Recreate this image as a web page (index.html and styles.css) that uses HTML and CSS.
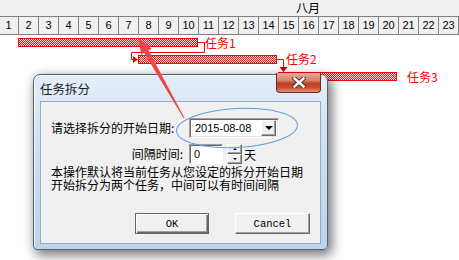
FILE: index.html
```html
<!DOCTYPE html>
<html lang="zh-CN">
<head>
    <meta charset="UTF-8">
    <title>任务拆分</title>
    <link rel="stylesheet" href="styles.css">
</head>
<body>
    <div class="page">
        <div class="gantt">
            <div class="months"><span class="month">八月</span></div>
            <div class="days">
                <div class="day">1</div><div class="day">2</div><div class="day">3</div><div class="day">4</div>
                <div class="day">5</div><div class="day">6</div><div class="day">7</div><div class="day">8</div>
                <div class="day">9</div><div class="day">10</div><div class="day">11</div><div class="day">12</div>
                <div class="day">13</div><div class="day">14</div><div class="day">15</div><div class="day">16</div>
                <div class="day">17</div><div class="day">18</div><div class="day">19</div><div class="day">20</div>
                <div class="day">21</div><div class="day">22</div><div class="day">23</div>
            </div>
            <div class="canvas">
                <div class="bar" style="left: 18px; top: 3px; width: 180px"></div>
                <div class="bar" style="left: 138px; top: 20px; width: 139px"></div>
                <div class="bar" style="left: 278px; top: 37px; width: 119px"></div>
                <span class="task-label" style="left: 205px; top: 1px">任务1</span>
                <span class="task-label" style="left: 286px; top: 17px">任务2</span>
                <span class="task-label" style="left: 407px; top: 35px">任务3</span>
            </div>
        </div>

        <!-- 任务之间的连线 -->
        <svg class="links" width="459" height="260" viewBox="0 0 459 260">
            <path d="M198 42.5 H204.5 V52.5 H131.5 V59.5 H134" fill="none" stroke="#f00" stroke-width="1"/>
            <polygon points="133,56 138,59.5 133,63" fill="#e00"/>
            <path d="M277 59.5 H283.5 V68" fill="none" stroke="#f00" stroke-width="1"/>
            <polygon points="279.5,67 287.5,67 283.5,72" fill="#c00"/>
        </svg>

        <div class="dialog">
            <div class="title-bar">
                <span class="title">任务拆分</span>
                <div class="close-btn">
                    <svg width="14" height="11" viewBox="0 0 14 11">
                        <path d="M2.5 1.5 L11.5 9.5 M11.5 1.5 L2.5 9.5" stroke="#4a3a38" stroke-width="4.4" stroke-linecap="square"/>
                        <path d="M2.5 1.5 L11.5 9.5 M11.5 1.5 L2.5 9.5" stroke="#fff" stroke-width="2.4" stroke-linecap="square"/>
                    </svg>
                </div>
            </div>
            <div class="client">
                <div class="form">
                    <span class="field-label">请选择拆分的开始日期:</span>
                    <div class="combo">
                        <span class="combo-text">2015-08-08</span>
                        <span class="drop-btn"><i class="tri-down"></i></span>
                    </div>
                    <span class="field-label right">间隔时间:</span>
                    <div class="spin-row">
                        <div class="spin-input">0</div>
                        <div class="spin-btns">
                            <span class="spin-btn"><i class="tri-up small"></i></span>
                            <span class="spin-btn"><i class="tri-down small"></i></span>
                        </div>
                        <span class="unit">天</span>
                    </div>
                </div>
                <p class="desc">本操作默认将当前任务从您设定的拆分开始日期<br>开始拆分为两个任务，中间可以有时间间隔</p>
                <div class="buttons">
                    <button class="btn default">OK</button>
                    <button class="btn">Cancel</button>
                </div>
            </div>
        </div>

        <!-- 标注 -->
        <svg class="marks" width="459" height="260" viewBox="0 0 459 260">
            <ellipse cx="237" cy="128" rx="60.5" ry="19.5" transform="rotate(-3 237 128)" fill="none" stroke="#5a9fdf" stroke-width="1"/>
            <polygon points="138,37 151.6,48.8 148.6,50.6 184.4,117.8 183.6,118.2 144.2,53 141.2,54.8" fill="#f04545"/>
        </svg>
    </div>
</body>
</html>
```

FILE: styles.css
```css
body {
    margin: 0;
    background-color: white;
    font-family: "Noto Sans CJK SC", "Liberation Sans", sans-serif;
    font-size: 12px;
    color: #000;
}
.page {
    position: relative;
    width: 459px;
    height: 260px;
    overflow: hidden;
}
.months {
    height: 16px;
    background-color: #f0f0f0;
    line-height: 16px;
}
.month {
    margin-left: 296px;
    font-size: 12px;
}
.days {
    display: flex;
    margin-left: -1px;
    background-color: #f0f0f0;
}
.day {
    flex: 0 0 20px;
    box-sizing: border-box;
    height: 19px;
    border-top: 1px solid #808080;
    border-bottom: 1px solid #808080;
    border-right: 1px solid #808080;
    text-align: center;
    font-family: "Liberation Sans", sans-serif;
    font-size: 11px;
    line-height: 17px;
}
.canvas {
    position: relative;
    height: 225px;
}
.bar {
    position: absolute;
    height: 9px;
    box-sizing: border-box;
    border: 1px solid #f00;
    background: repeating-conic-gradient(#f00 0 25%, #fff 0 50%) 0 0 / 2px 2px;
}
.task-label {
    position: absolute;
    color: #f00;
    font-size: 12px;
    line-height: 14px;
}
.links,
.marks {
    position: absolute;
    left: 0;
    top: 0;
}
.dialog {
    position: absolute;
    left: 33px;
    top: 74px;
    width: 295px;
    height: 176px;
    box-sizing: border-box;
    border: 1px solid #53606e;
    border-radius: 7px 7px 4px 4px;
    padding: 0 6px 6px 6px;
    background: linear-gradient(#e4eef9, #cddff2 40%, #bcd3ec);
    box-shadow: 3px 4px 12px 1px rgba(0,0,0,0.55), inset 1px 1px 0 rgba(255,255,255,0.8);
}
.title-bar {
    position: relative;
    height: 26px;
    display: flex;
    align-items: center;
}
.title {
    font-size: 12.5px;
    color: #1a1a1a;
    padding-top: 1px;
}
.close-btn {
    position: absolute;
    right: 0;
    top: -2px;
    width: 45px;
    height: 20px;
    box-sizing: border-box;
    border: 1px solid #6e2a1e;
    border-top: none;
    border-radius: 0 0 4px 4px;
    background: linear-gradient(#e9ab9c, #d97d68 40%, #c1401f 55%, #c84a2c 75%, #e1907a);
    display: flex;
    align-items: center;
    justify-content: center;
}
.close-btn svg {
    display: block;
}
.client {
    height: 143px;
    box-sizing: border-box;
    border: 1px solid #98abc0;
    background-color: #f0f0f0;
    padding: 16px 10px 0 10px;
}
.form {
    display: grid;
    grid-template-columns: 138px auto;
    row-gap: 6px;
    align-items: center;
}
.field-label {
    line-height: 20px;
    white-space: nowrap;
}
.field-label.right {
    text-align: right;
    padding-right: 6px;
}
.combo {
    width: 90px;
    height: 20px;
    box-sizing: border-box;
    border: 1px solid;
    border-color: #a0a0a0 #fff #fff #a0a0a0;
    box-shadow: inset 1px 1px 0 #696969, inset -1px -1px 0 #e3e3e3;
    background-color: white;
    display: flex;
    align-items: center;
    padding: 1px 2px 1px 1px;
}
.combo-text {
    flex: 1;
    padding-left: 4px;
    font-family: "Liberation Sans", sans-serif;
    font-size: 11px;
}
.drop-btn,
.spin-btn {
    box-sizing: border-box;
    background-color: #f0f0f0;
    border: 1px solid;
    border-color: #fff #696969 #696969 #fff;
    box-shadow: inset -1px -1px 0 #a0a0a0;
    display: flex;
    align-items: center;
    justify-content: center;
}
.drop-btn {
    width: 15px;
    height: 16px;
}
.tri-down {
    width: 0;
    height: 0;
    border-left: 4px solid transparent;
    border-right: 4px solid transparent;
    border-top: 4px solid #000;
}
.tri-up {
    width: 0;
    height: 0;
    border-left: 3px solid transparent;
    border-right: 3px solid transparent;
    border-bottom: 3px solid #000;
}
.tri-down.small {
    border-left-width: 2px;
    border-right-width: 2px;
    border-top-width: 2px;
}
.tri-up.small {
    border-left-width: 2px;
    border-right-width: 2px;
    border-bottom-width: 2px;
}
.spin-row {
    display: flex;
    align-items: center;
}
.spin-input {
    width: 34px;
    height: 20px;
    box-sizing: border-box;
    border: 1px solid;
    border-color: #a0a0a0 #fff #fff #a0a0a0;
    box-shadow: inset 1px 1px 0 #696969;
    background-color: white;
    padding-left: 4px;
    font-family: "Liberation Sans", sans-serif;
    font-size: 11px;
    line-height: 18px;
}
.spin-btns {
    display: flex;
    flex-direction: column;
    margin-left: 4px;
}
.spin-btn {
    width: 15px;
    height: 10px;
}
.unit {
    margin-left: 2px;
}
.desc {
    margin: 1px 0 0 0;
    line-height: 13px;
    white-space: nowrap;
}
.buttons {
    display: flex;
    justify-content: flex-end;
    gap: 26px;
    margin-top: 22px;
}
.btn {
    width: 75px;
    height: 21px;
    box-sizing: border-box;
    padding: 0;
    background-color: #f0f0f0;
    border: 1px solid;
    border-color: #fff #696969 #696969 #fff;
    box-shadow: inset -1px -1px 0 #a0a0a0;
    font-family: "Liberation Mono", monospace;
    font-size: 10.5px;
    color: #000;
}
.btn.default {
    width: 74px;
    border-color: #646464;
    box-shadow: inset 1px 1px 0 #fff, inset -1px -1px 0 #696969, inset -2px -2px 0 #a0a0a0;
}
```
